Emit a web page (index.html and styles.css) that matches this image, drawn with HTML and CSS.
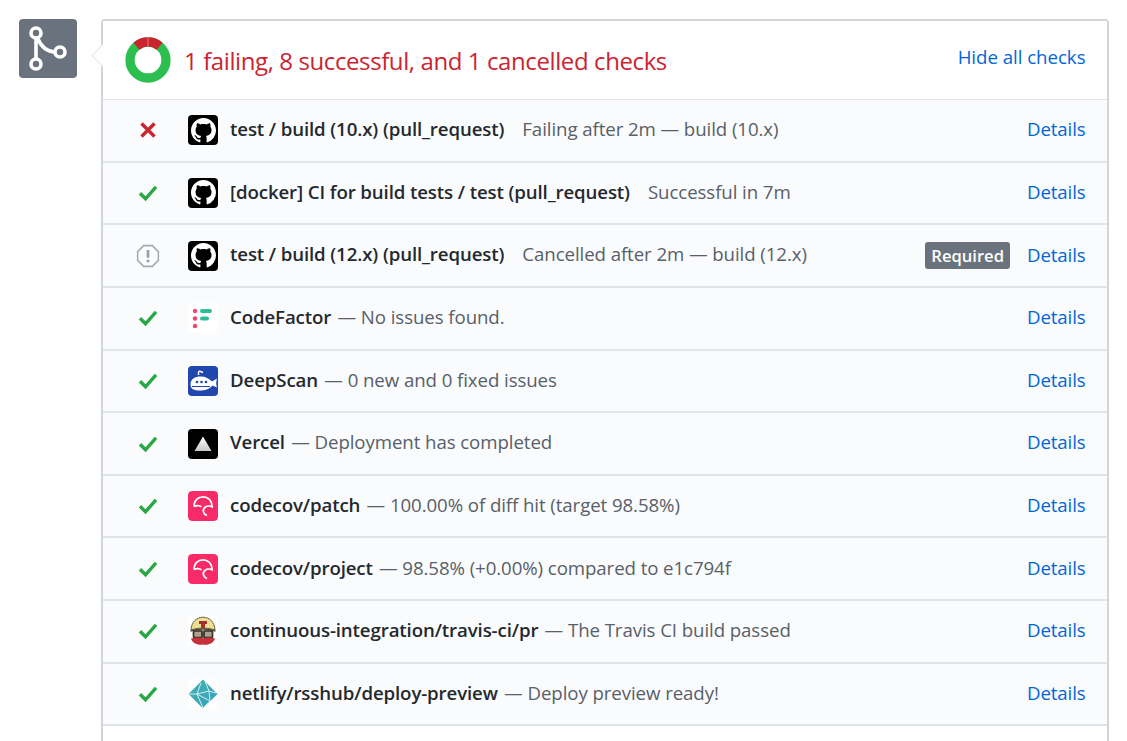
FILE: index.html
```html
<!DOCTYPE html>
<html lang="en">
<head>
<meta charset="utf-8">
<title>Checks</title>
<link rel="stylesheet" href="styles.css">
</head>
<body>
<svg class="defs" width="0" height="0" aria-hidden="true">
  <symbol id="check" viewBox="0 0 20 20"><path d="M2 10.300 L7.500 15.800 L18 3.800" fill="none" stroke="#28a745" stroke-width="3.400"/></symbol>
  <symbol id="mark" viewBox="0 0 16 16"><path fill="#fff" d="M8 0C3.58 0 0 3.58 0 8c0 3.54 2.29 6.53 5.47 7.59.4.07.55-.17.55-.38 0-.19-.01-.82-.01-1.49-2.01.37-2.53-.49-2.69-.94-.09-.23-.48-.94-.82-1.13-.28-.15-.68-.52-.01-.53.63-.01 1.08.58 1.23.82.72 1.21 1.87.87 2.33.66.07-.52.28-.87.51-1.07-1.78-.2-3.64-.89-3.64-3.95 0-.87.31-1.59.82-2.15-.08-.2-.36-1.02.08-2.12 0 0 .67-.21 2.2.82.64-.18 1.32-.27 2-.27.68 0 1.36.09 2 .27 1.53-1.04 2.2-.82 2.2-.82.44 1.1.16 1.92.08 2.12.51.56.82 1.27.82 2.15 0 3.07-1.87 3.75-3.65 3.95.29.25.54.73.54 1.48 0 1.07-.01 1.93-.01 2.2 0 .21.15.46.55.38A8.013 8.013 0 0016 8c0-4.42-3.58-8-8-8z"/></symbol>
  <symbol id="codecov" viewBox="0 0 30 30"><rect width="30" height="30" rx="4" fill="#f82a68"/><path d="M6 15.500C6 9.500 10 5.800 15 5.800s9 3.700 9.200 10c-2.700-1.300-6.200-.8-8 1.300-1.500 1.900-1.300 5.900 2.800 7.400M6 15.500c2-1.300 5.500-1.300 7.500.3" fill="none" stroke="#fff" stroke-width="1.700"/></symbol>
</svg>
<main class="layout">
  <div class="merge-icon">
    <svg viewBox="0 0 58 59" width="58" height="59"><g fill="none" stroke="#fff" stroke-width="3.600"><circle cx="17" cy="14" r="5"/><circle cx="17" cy="45" r="5"/><circle cx="41" cy="33" r="5"/><path d="M17 19V40M19 20c3 7 8 12.500 17 13"/></g></svg>
  </div>
  <section class="box">
    <header class="head">
      <svg class="donut" viewBox="0 0 46 46" width="46" height="46"><circle cx="23" cy="23" r="18" fill="none" stroke="#2cbe4e" stroke-width="9.300"/><path d="M11.400 9.200A18 18 0 0 1 34.600 9.200" fill="none" stroke="#cb2431" stroke-width="9.300"/><path d="M23 .4V9.600" stroke="#e8a0a5" stroke-width=".7"/></svg>
      <h2 class="title">1 failing, 8 successful, and 1 cancelled checks</h2>
      <a class="link link-head">Hide all checks</a>
    </header>

    <div class="row">
      <span class="status"><svg viewBox="0 0 20 20" width="20" height="20"><path d="M3.500 3.500L16.500 16.500M16.500 3.500L3.500 16.500" stroke="#cb2431" stroke-width="3.400"/></svg></span>
      <span class="logo logo-black"><svg viewBox="0 0 16 16" width="25" height="25"><use href="#mark"/></svg></span>
      <span class="text"><strong>test / build (10.x) (pull_request)</strong><span class="desc gap">Failing after 2m — build (10.x)</span></span>
      <a class="link">Details</a>
    </div>
    <div class="row">
      <span class="status"><svg width="20" height="20"><use href="#check"/></svg></span>
      <span class="logo logo-black"><svg viewBox="0 0 16 16" width="25" height="25"><use href="#mark"/></svg></span>
      <span class="text"><strong>[docker] CI for build tests / test (pull_request)</strong><span class="desc gap">Successful in 7m</span></span>
      <a class="link">Details</a>
    </div>
    <div class="row">
      <span class="status"><svg viewBox="0 0 22 22" width="24" height="24"><path d="M7 1.500H15L20.500 7V15L15 20.500H7L1.500 15V7Z" fill="none" stroke="#a3aab1" stroke-width="1.400"/><path d="M11 5.500V12.500M11 14.500V16.800" stroke="#959da5" stroke-width="2.400"/></svg></span>
      <span class="logo logo-black"><svg viewBox="0 0 16 16" width="25" height="25"><use href="#mark"/></svg></span>
      <span class="text"><strong>test / build (12.x) (pull_request)</strong><span class="desc gap">Cancelled after 2m — build (12.x)</span></span>
      <span class="badge">Required</span>
      <a class="link">Details</a>
    </div>
    <div class="row">
      <span class="status"><svg width="20" height="20"><use href="#check"/></svg></span>
      <span class="logo logo-white"><svg viewBox="0 0 30 30" width="30" height="30"><circle cx="7" cy="8" r="2.200" fill="#f2456d"/><circle cx="7" cy="15.500" r="2.200" fill="#f2456d"/><circle cx="7" cy="23" r="2.200" fill="#f2456d"/><rect x="12" y="6" width="12" height="4" rx="2" fill="#2ebd94"/><rect x="12" y="13.500" width="9" height="4" rx="2" fill="#2ebd94"/></svg></span>
      <span class="text"><strong>CodeFactor</strong><span class="desc dash"> — No issues found.</span></span>
      <a class="link">Details</a>
    </div>
    <div class="row">
      <span class="status"><svg width="20" height="20"><use href="#check"/></svg></span>
      <span class="logo logo-blue"><svg viewBox="0 0 30 30" width="30" height="30"><path d="M10.500 9V6.500C10.500 5.500 11.500 5 12.500 5.500L15 6.500" fill="none" stroke="#fff" stroke-width="1.500"/><path d="M2.500 18.500C2.500 13 7 10.500 12.500 10.500C17.500 10.500 21 12.500 24 15.500L29 12.500C28 15.500 28 18.500 29 21.500L24.500 19.500C21 23.500 17 24.500 12 24.500C6 24.500 2.500 23 2.500 18.500Z" fill="#fff"/><circle cx="9" cy="16" r="1.300" fill="#2147ae"/><circle cx="13.500" cy="16" r="1.300" fill="#2147ae"/><circle cx="18" cy="16" r="1.300" fill="#2147ae"/><path d="M4 20.500H22" stroke="#2147ae" stroke-width="1.200"/></svg></span>
      <span class="text"><strong>DeepScan</strong><span class="desc dash"> — 0 new and 0 fixed issues</span></span>
      <a class="link">Details</a>
    </div>
    <div class="row">
      <span class="status"><svg width="20" height="20"><use href="#check"/></svg></span>
      <span class="logo logo-black"><svg viewBox="0 0 30 30" width="30" height="30"><defs><linearGradient id="vercel" x1="0" y1="0" x2="0" y2="1"><stop offset="0" stop-color="#fff"/><stop offset="1" stop-color="#c8c8c8"/></linearGradient></defs><path d="M15 7.500L23.500 22H6.500Z" fill="url(#vercel)"/></svg></span>
      <span class="text"><strong>Vercel</strong><span class="desc dash"> — Deployment has completed</span></span>
      <a class="link">Details</a>
    </div>
    <div class="row">
      <span class="status"><svg width="20" height="20"><use href="#check"/></svg></span>
      <span class="logo"><svg width="30" height="30"><use href="#codecov"/></svg></span>
      <span class="text"><strong>codecov/patch</strong><span class="desc dash"> — 100.00% of diff hit (target 98.58%)</span></span>
      <a class="link">Details</a>
    </div>
    <div class="row">
      <span class="status"><svg width="20" height="20"><use href="#check"/></svg></span>
      <span class="logo"><svg width="30" height="30"><use href="#codecov"/></svg></span>
      <span class="text"><strong>codecov/project</strong><span class="desc dash"> — 98.58% (+0.00%) compared to e1c794f</span></span>
      <a class="link">Details</a>
    </div>
    <div class="row">
      <span class="status"><svg width="20" height="20"><use href="#check"/></svg></span>
      <span class="logo logo-white"><svg viewBox="0 0 30 30" width="30" height="30"><path d="M6 14H24V24C22 28 8 28 6 24Z" fill="#b89f86"/><path d="M3 14C3.500 6 8.500 1.200 15 1.200S26.500 6 27 14C20 11.500 10 11.500 3 14Z" fill="#ecdf92" stroke="#6b5f3c" stroke-width="1"/><path d="M11 5H19V8H17V12H13V8H11Z" fill="#a32e2e"/><path d="M2.500 15C10 12.500 20 12.500 27.500 15" fill="none" stroke="#55493a" stroke-width="1.500"/><rect x="5.500" y="15" width="8.500" height="6.500" rx="1" fill="#a9a38d" stroke="#33312c" stroke-width="1.700"/><rect x="16" y="15" width="8.500" height="6.500" rx="1" fill="#a9a38d" stroke="#33312c" stroke-width="1.700"/><path d="M3 22.500C7 21.500 11.500 21 15 22.500C18.500 21 23 21.500 27 22.500C25.500 27.500 20 29.500 15 28.500C10 29.500 4.500 27.500 3 22.500Z" fill="#c62f3c"/></svg></span>
      <span class="text"><strong>continuous-integration/travis-ci/pr</strong><span class="desc dash"> — The Travis CI build passed</span></span>
      <a class="link">Details</a>
    </div>
    <div class="row">
      <span class="status"><svg width="20" height="20"><use href="#check"/></svg></span>
      <span class="logo logo-white"><svg viewBox="0 0 30 30" width="30" height="30"><defs><linearGradient id="netlify" x1="0" y1="0" x2="1" y2="1"><stop offset="0" stop-color="#3fb5ad"/><stop offset="1" stop-color="#3a9fc0"/></linearGradient></defs><path d="M15 .5L29.500 15L15 29.500L.5 15Z" fill="url(#netlify)"/><path d="M9 15L.5 15M9 15L13 4M9 15L21 12L17 2.500M21 12L28 14M21 12L22 22M9 15L15 29M22 22L15 29M22 22L9 15" stroke="#e4f5f5" stroke-width=".9" fill="none"/></svg></span>
      <span class="text"><strong>netlify/rsshub/deploy-preview</strong><span class="desc dash"> — Deploy preview ready!</span></span>
      <a class="link">Details</a>
    </div>
    <div class="row row-last"></div>
  </section>
</main>
</body>
</html>
```
FILE: styles.css
```css
* { box-sizing: border-box; }
html, body { margin: 0; height: 100%; overflow: hidden; background: #fff; }
body { font-family: "Open Sans", "Noto Sans", sans-serif; font-size: 18.67px; color: #24292e; }
.defs { position: absolute; }
.layout { display: flex; align-items: flex-start; padding: 19px 18px 0 19px; }
.merge-icon { flex: none; width: 58px; height: 59px; background: #6a737d; border-radius: 4px; margin-right: 24px; }
.merge-icon svg { display: block; }
.box { position: relative; flex: 1; background: #fff; border: 2px solid #d1d5da; border-bottom: 0; border-radius: 4px 4px 0 0; }
.box::before { content: ""; position: absolute; left: -11px; top: 24px; width: 20px; height: 20px; background: #fff; border-left: 1.500px solid #dfe2e5; border-bottom: 1.500px solid #dfe2e5; transform: rotate(45deg) scale(.75); }
.head { position: relative; display: flex; align-items: center; height: 79px; padding: 0 21.500px 0 22px; border-bottom: 1.500px solid #e1e4e8; background: #fff; }
.donut { flex: none; margin-right: 13px; }
.title { flex: 1; margin: 0; font-size: 24px; font-weight: 500; color: #cb2431; letter-spacing: -.4px; }
.link { color: #0366d6; letter-spacing: -.12px; padding-bottom: 3.200px; }
.link-head { letter-spacing: -.03px; padding-bottom: 8px; }
.row { display: flex; align-items: center; height: 62.650px; padding: 0 21.500px 0 33px; background: #fafbfc; border-bottom: 2px solid #e1e4e8; }
.status { flex: none; width: 24px; display: flex; justify-content: center; margin-right: 28px; }
.status svg { display: block; }
.logo { flex: none; width: 30px; height: 30px; border-radius: 4px; overflow: hidden; margin-right: 12px; display: flex; align-items: center; justify-content: center; }
.logo svg { display: block; }
.logo-black { background: #000; }
.logo-white { background: #fff; }
.logo-blue { background: #2147ae; }
.text { flex: 1; white-space: nowrap; padding-bottom: 3.500px; }
.text strong { font-weight: 600; letter-spacing: -.12px; }
.desc { color: #586069; letter-spacing: -.08px; }
.dash { margin-left: 1.500px; }
.gap { margin-left: 18px; }
.badge { flex: none; padding: 0 6px; height: 27px; line-height: 27px; border-radius: 3px; background: #6a737d; color: #fff; font-size: 16.600px; font-weight: 600; margin-right: 17px; }
.row-last { border-bottom: 0; background: #fff; }
```
